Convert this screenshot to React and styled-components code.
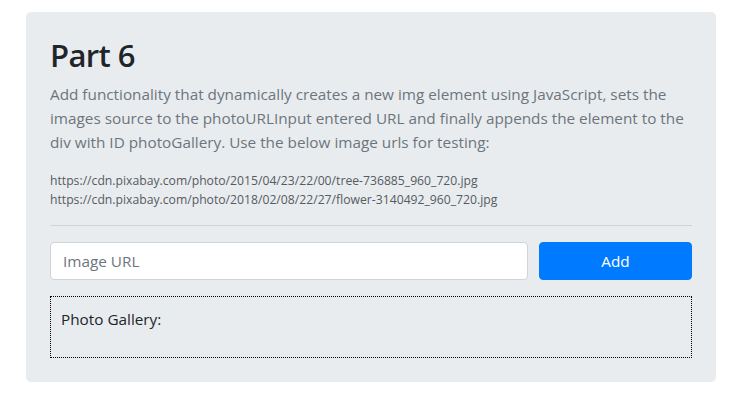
import React from 'react';
import styled, { createGlobalStyle } from 'styled-components';

const GlobalStyle = createGlobalStyle`
    body {
        margin: 0;
        background: #fff;
        font-family: "Open Sans", "Noto Sans", sans-serif;
        color: #212529;
    }
`;

const Page = styled.div`
    padding: 12px 18px 12px 26px;
`;

const Jumbotron = styled.div`
    background-color: #e9ecef;
    border-radius: 5px;
    padding: 25px 24px 24px;
`;

const Heading = styled.h1`
    margin: 0 0 8px;
    font-size: 31px;
    font-weight: 600;
    letter-spacing: -0.6px;
    line-height: 1.2;
    color: #212529;
`;

const Lead = styled.p`
    margin: 0 0 17px;
    font-size: 15.3px;
    line-height: 24px;
    color: #6c757d;
`;

const UrlList = styled.div`
    font-size: 12.2px;
    line-height: 19px;
    color: #555b61;
`;

const Divider = styled.hr`
    margin: 16px 0;
    border: 0;
    border-top: 1px solid rgba(0, 0, 0, 0.1);
`;

const FormRow = styled.div`
    display: flex;
    gap: 11px;
    margin-bottom: 16px;
`;

const Input = styled.input`
    flex: 1;
    height: 38px;
    box-sizing: border-box;
    padding: 6px 12px;
    font-family: inherit;
    font-size: 15.3px;
    color: #495057;
    background: #fff;
    border: 1px solid #ced4da;
    border-radius: 4px;

    &::placeholder {
        color: #6c757d;
    }
`;

const Button = styled.button`
    width: 153px;
    height: 38px;
    font-family: inherit;
    font-size: 15.3px;
    color: #fff;
    background-color: #007bff;
    border: 1px solid #007bff;
    border-radius: 4px;
`;

const Gallery = styled.div`
    border: 1px dotted #000;
    padding: 10px;
    height: 62px;
    box-sizing: border-box;
    font-size: 15.3px;
    line-height: 24px;
`;

const App = () => {
    return (
        <Page>
            <GlobalStyle />
            <Jumbotron>
                <Heading>Part 6</Heading>
                <Lead>
                    Add functionality that dynamically creates a new img element using JavaScript, sets the<br />
                    images source to the photoURLInput entered URL and finally appends the element to the<br />
                    div with ID photoGallery. Use the below image urls for testing:
                </Lead>
                <UrlList>
                    <div>https://cdn.pixabay.com/photo/2015/04/23/22/00/tree-736885_960_720.jpg</div>
                    <div>https://cdn.pixabay.com/photo/2018/02/08/22/27/flower-3140492_960_720.jpg</div>
                </UrlList>
                <Divider />
                <FormRow>
                    <Input placeholder="Image URL" />
                    <Button>Add</Button>
                </FormRow>
                <Gallery>Photo Gallery:</Gallery>
            </Jumbotron>
        </Page>
    );
};

export default App;
